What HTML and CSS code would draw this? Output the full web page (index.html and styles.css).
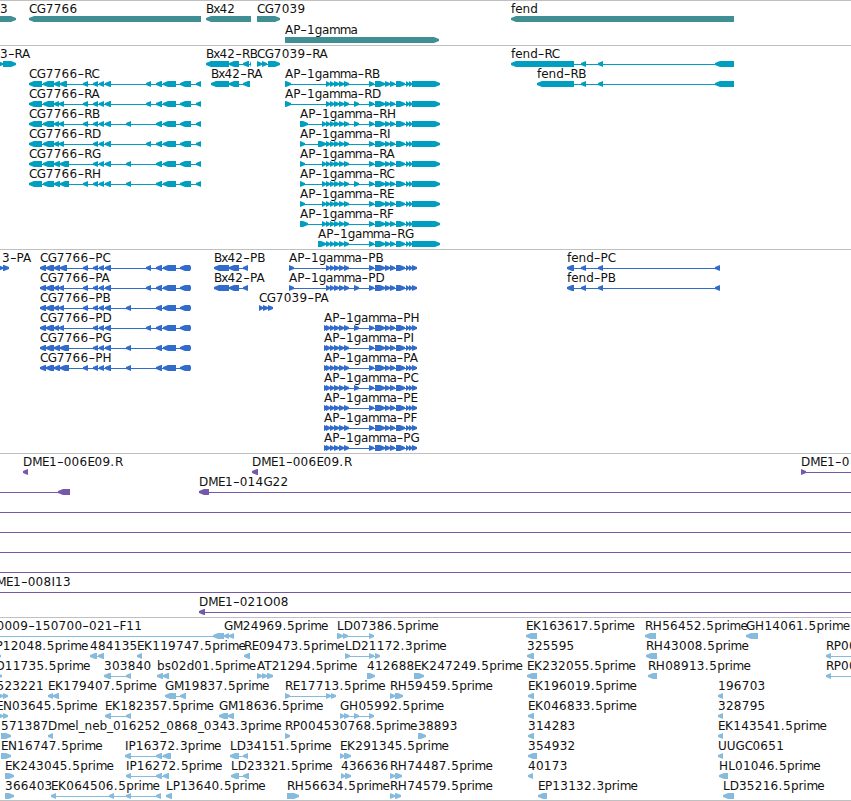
FILE: index.html
```
<!DOCTYPE html>
<html>
<head>
    <meta charset="utf-8">
    <title>Genome Browser</title>
    <link rel="stylesheet" href="styles.css">
</head>
<body>
    <div class="browser">
        <div class="track genes"><svg id="genes"></svg></div>
        <div class="track transcripts"><svg id="transcripts"></svg></div>
        <div class="track proteins"><svg id="proteins"></svg></div>
        <div class="track clones"><svg id="clones"></svg></div>
        <div class="track ests"><svg id="ests"></svg></div>
    </div>
    <script src="script.js"></script>
</body>
</html>
```

FILE: styles.css
```
body {
    margin: 0;
    background-color: #fff;
    overflow: hidden;
}
.browser {
    display: flex;
    flex-direction: column;
    width: 851px;
    border-bottom: 1px solid #c0c0c0;
}
.track {
    box-sizing: border-box;
    border-top: 1px solid #c0c0c0;
    overflow: hidden;
}
.track svg {
    display: block;
    width: 100%;
    height: 100%;
}
.track text {
    font-family: "DejaVu Sans", sans-serif;
    font-size: 12px;
    fill: #111;
}
.genes {
    height: 45px;
    color: #408f94;
}
.transcripts {
    height: 204px;
    color: #009fc0;
}
.proteins {
    height: 204px;
    color: #316ccc;
}
.clones {
    height: 164px;
    color: #7658a8;
}
.ests {
    height: 183px;
    color: #87bbdd;
}
```

FILE: script.js
```
// Feature: [label, strand, [start, end, start, end, ...], label x, line start, line end]

// exons shared by the CG7766 and AP-1gamma isoforms
const cgTail = [156, 162, 163, 176];
const cgMid = [93, 98, 99, 104, 105, 111];
const apHead = [326, 330, 330, 334, 334, 339, 339, 344, 344, 349];
const apMid = [369, 374, 375, 385, 385, 390, 390, 395, 396, 405, 406, 409, 409, 412];

function cg(name, start, end, last, extra) {
    return [name, '-', [...start, ...last, ...extra, ...cgMid, ...cgTail, ...end]];
}
function cgR(name, last, extra) {
    return cg(name, [29, 42, 43, 54], [180, 191, 196, 201], last, extra);
}
function cgP(name, last, extra) {
    return cg(name, [40, 46, 46, 54], [180, 190, 190, 191], last, extra);
}
function apR(name, first, extra) {
    return [name, '+', [...first, ...apHead, ...extra, ...apMid, 412, 440]];
}
function apP(name, first, extra) {
    return [name, '+', [...first, ...apHead, ...extra, ...apMid, 412, 417]];
}

const wide = [54, 60, 60, 67];
const narrow = [54, 59, 59, 64];
const wider = [54, 60, 60, 69];

const tracks = {
    genes: { pitch: 21, rows: [
        [['3', '+', [-20, 16], 0], ['CG7766', '-', [29, 201]], ['Bx42', '-', [206, 251]],
         ['CG7039', '+', [257, 280]], ['fend', '-', [511, 734]]],
        [['AP-1gamma', '+', [285, 439]]]
    ]},
    transcripts: { pitch: 20, rows: [
        [['3-RA', '+', [-4, 3, 3, 16], 0], ['Bx42-RB', '-', [206, 229, 229, 239, 243, 249, 250, 251]],
         ['CG7039-RA', '+', [257, 262, 262, 267, 268, 280]],
         ['fend-RC', '-', [511, 574, 581, 586, 598, 603, 715, 734]]],
        [cgR('CG7766-RC', wide, [83, 88, 146, 151]), ['Bx42-RA', '-', [211, 229, 229, 239, 243, 250]],
         apR('AP-1gamma-RB', [285, 291], []), ['fend-RB', '-', [537, 574, 581, 586, 598, 603, 715, 734]]],
        [cgR('CG7766-RA', narrow, [83, 88, 146, 151]), apR('AP-1gamma-RD', [285, 291], [354, 359])],
        [cgR('CG7766-RB', narrow, [83, 88, 126, 131]), apR('AP-1gamma-RH', [300, 308, 322, 326], [354, 359])],
        [cgR('CG7766-RD', narrow, [146, 151]), apR('AP-1gamma-RI', [300, 305, 318, 326], [])],
        [cgR('CG7766-RG', wider, [126, 131]), apR('AP-1gamma-RA', [300, 305, 322, 326], [])],
        [cgR('CG7766-RH', wider, [83, 88, 126, 131]), apR('AP-1gamma-RC', [300, 305, 322, 326], [354, 359])],
        [apR('AP-1gamma-RE', [300, 305, 322, 326], [])],
        [apR('AP-1gamma-RF', [300, 308, 322, 326], [])],
        [apR('AP-1gamma-RG', [318, 326], [])]
    ]},
    proteins: { pitch: 20, rows: [
        [['3-PA', '+', [-4, 3, 3, 9], 2], cgP('CG7766-PC', wide, [83, 88, 146, 151]),
         ['Bx42-PB', '-', [214, 229, 229, 239, 243, 248]], apP('AP-1gamma-PB', [289, 294], []),
         ['fend-PC', '-', [567, 574, 581, 586, 598, 603, 715, 720]]],
        [cgP('CG7766-PA', narrow, [83, 88, 146, 151]), ['Bx42-PA', '-', [214, 229, 229, 239, 243, 248]],
         apP('AP-1gamma-PD', [289, 294], [354, 359]),
         ['fend-PB', '-', [567, 574, 581, 586, 598, 603, 715, 720]]],
        [cgP('CG7766-PB', narrow, [83, 88, 126, 131]), ['CG7039-PA', '+', [259, 263, 263, 268, 268, 273]]],
        [cgP('CG7766-PD', narrow, [146, 151]), apP('AP-1gamma-PH', [324, 328], [354, 359])],
        [cgP('CG7766-PG', wider, [126, 131]), apP('AP-1gamma-PI', [324, 328], [])],
        [cgP('CG7766-PH', wider, [83, 88, 126, 131]), apP('AP-1gamma-PA', [324, 328], [])],
        [apP('AP-1gamma-PC', [324, 328], [354, 359])],
        [apP('AP-1gamma-PE', [324, 328], [])],
        [apP('AP-1gamma-PF', [324, 328], [])],
        [apP('AP-1gamma-PG', [324, 328], [])]
    ]},
    clones: { pitch: 20, rows: [
        [['DME1-006E09.R', '-', [23, 28]], ['DME1-006E09.R', '-', [252, 258]],
         ['DME1-0', '+', [801, 806], 801, 801, 851]],
        [['', '-', [58, 70], 0, 0, 70], ['DME1-014G22', '-', [199, 209], 199, 199, 851]],
        [['', '-', [], 0, 0, 851]],
        [['', '-', [], 0, 0, 851]],
        [['', '-', [], 0, 0, 851]],
        [['', '-', [], 0, 0, 851]],
        [['DME1-008I13', '-', [], -13, 0, 851]],
        [['DME1-021O08', '-', [199, 205], 199, 199, 851]]
    ]},
    ests: { pitch: 20, rows: [
        [['0009-150700-021-F11', '-', [213, 224], -3.5, 0, 224], ['GM24969.5prime', '-', [224, 229, 229, 234]],
         ['LD07386.5prime', '+', [337, 343, 343, 348, 369, 374]], ['EK163617.5prime', '-', [526, 537]],
         ['RH56452.5prime', '-', [645, 656]], ['GH14061.5prime', '-', [746, 758]]],
        [['P12048.5prime', '+', [-5, 1], -4.5], ['484135', '-', [90, 97, 98, 104]], ['EK119747.5prime', '-', [137, 142]],
         ['RE09473.5prime', '-', [244, 250]], ['LD21172.3prime', '+', [345, 350, 369, 374, 375, 380]],
         ['325595', '-', [527, 534]], ['RH43008.5prime', '-', [646, 657]], ['RP00', '-', [826, 831], 826, 826, 851]],
        [['D11735.5prime', '+', [-5, 2], -4.5], ['303840', '-', [104, 111, 126, 131]],
         ['bs02d01.5prime', '-', [157, 163, 163, 169]], ['AT21294.5prime', '+', [257, 262, 262, 267, 267, 273]],
         ['412688', '+', [367, 375]], ['EK247249.5prime', '+', [414, 424]], ['EK232055.5prime', '-', [527, 537]],
         ['RH08913.5prime', '-', [648, 657]], ['RP00', '-', [826, 831], 826, 826, 851]],
        [['523221', '+', [-5, 3, 3, 8], -3.5], ['EK179407.5prime', '-', [48, 53, 53, 59]],
         ['GM19837.5prime', '-', [165, 176, 180, 186]], ['RE17713.5prime', '+', [285, 290, 326, 331, 331, 336]],
         ['RH59459.5prime', '+', [390, 395, 395, 403]], ['EK196019.5prime', '-', [528, 534]], ['196703', '-', [718, 723]]],
        [['EN03645.5prime', '+', [-5, 3, 3, 8], -4], ['EK182357.5prime', '-', [105, 111, 126, 131]],
         ['GM18636.5prime', '-', [219, 228, 228, 234]], ['GH05992.5prime', '+', [340, 344, 344, 349, 354, 359, 369, 374]],
         ['EK046833.5prime', '-', [528, 534]], ['328795', '-', [718, 723]]],
        [['571387', '+', [1, 11]], ['Dmel_neb_016252_0868_0343.3prime', '-', [48, 53]],
         ['RP004530768.5prime', '+', [285, 290]], ['38893', '+', [418, 426]], ['314283', '-', [528, 534]],
         ['EK143541.5prime', '-', [718, 723]]],
        [['EN16747.5prime', '+', [1, 11]], ['IP16372.3prime', '-', [125, 131, 156, 162, 163, 171]],
         ['LD34151.5prime', '-', [230, 239, 243, 248]], ['EK291345.5prime', '+', [340, 344, 344, 351]],
         ['354932', '-', [528, 537]], ['UUGC0651', '-', [718, 723]]],
        [['EK243045.5prime', '+', [5, 14]], ['IP16272.5prime', '-', [126, 131, 156, 162, 163, 169]],
         ['LD23321.5prime', '-', [231, 239, 243, 249]], ['436636', '+', [341, 345, 345, 351]],
         ['RH74487.5prime', '+', [390, 395, 395, 402]], ['40173', '-', [528, 533]], ['HL01046.5prime', '-', [719, 728]]],
        [['366403', '+', [5, 14]], ['EK064506.5prime', '-', [51, 56, 109, 114, 126, 131, 156, 161]],
         ['LP13640.5prime', '-', [166, 172]], ['RH56634.5prime', '+', [287, 299]],
         ['RH74579.5prime', '+', [390, 395, 395, 401]], ['EP13132.3prime', '-', [538, 547]],
         ['LD35216.5prime', '-', [723, 734]]]
    ]}
};

// label spacing after each character, in px
const tracking = {
    '.': 0.7, m: -0.9, g: -0.4, a: -0.4, p: -0.15, r: -0.15, i: -0.15, e: -0.15, x: -1, f: 0.1,
    B: -0.9, C: -0.7, G: -0.2, M: -0.6, E: -0.5, K: 0.3, R: -0.5, H: 0.3, _: -0.1
};

function label(text, x, y) {
    let out = '';
    const dx = [];
    let gap = 0;
    for (const c of text) {
        dx.push(gap.toFixed(2));
        gap = /\d/.test(c) ? 0.27 : (tracking[c] ?? 0);
        out += c === '-' ? '<tspan textLength="6.7" lengthAdjust="spacingAndGlyphs">-</tspan>' : c;
    }
    return `<text x="${x}" y="${y}" dx="${dx.join(' ')}">${out}</text>`;
}

// pointed box, 6px high, head on the side of the strand
function exon(a, b, y, strand) {
    const head = Math.min(5, b - a);
    const tip = strand === '-' ? a : b;
    const neck = strand === '-' ? a + head : b - head;
    const mid = (tip + neck) / 2;
    const back = strand === '-' ? b : a;
    return `<path d="M${tip} ${y + 2}L${mid} ${y + 1}L${neck} ${y}H${back}V${y + 6}H${neck}L${mid} ${y + 5}L${tip} ${y + 4}Z"/>`;
}

for (const id in tracks) {
    let out = '';
    tracks[id].rows.forEach((row, i) => {
        const y = 15 + i * tracks[id].pitch;
        for (const [name, strand, ex, labelX, from, to] of row) {
            const x1 = from ?? Math.min(...ex);
            const x2 = to ?? Math.max(...ex);
            out += '<g fill="currentColor">';
            out += `<rect x="${x1}" y="${y + 3}" width="${x2 - x1}" height="1"/>`;
            for (let k = 0; k < ex.length; k += 2) {
                out += exon(ex[k], ex[k + 1], y, strand);
            }
            out += '</g>';
            if (name) {
                out += label(name, labelX ?? x1, y - 3);
            }
        }
    });
    document.getElementById(id).innerHTML = out;
}
```
